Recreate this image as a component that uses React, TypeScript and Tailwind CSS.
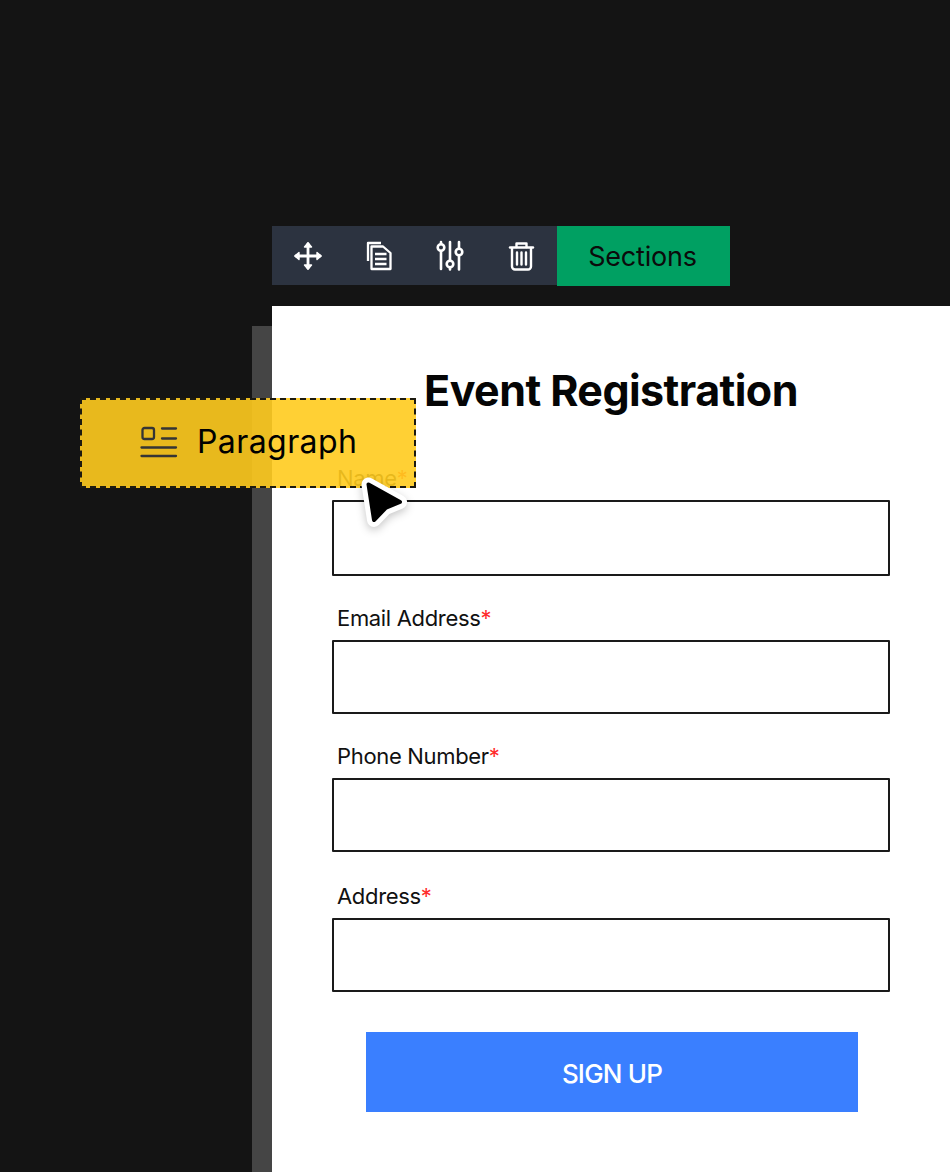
import React from "react";

const font = { fontFamily: "Inter, 'Liberation Sans', sans-serif" };

function Field({ label, h, mt }: { label: string; h: string; mt: string }) {
  return (
    <div className={mt}>
      <div className="h-[34px] pb-[10px] pl-[5px] text-[22px] leading-[24px] tracking-[-0.33px] text-[#111]">
        {label}
        <span className="text-[#ff2a2a]">*</span>
      </div>
      <div className={`${h} rounded-[1px] border-2 border-[#1a1a1a] bg-white`} />
    </div>
  );
}

export default function App() {
  return (
    <div className="relative h-[1172px] w-[950px] overflow-hidden bg-[#141414]" style={font}>
      <div className="pt-[226px] pl-[272px]">
        <div className="flex h-[60px] w-[458px]">
          <div className="flex h-[59px] w-[285px] items-start gap-[35px] bg-[#2c3340] pt-[12px] pl-[18px] text-white">
            <svg width="36" height="36" viewBox="0 0 36 36" fill="none" stroke="white" strokeWidth="2.8" strokeLinecap="round" strokeLinejoin="round">
              <path d="M18 6v24M6 18h24" />
              <path d="M14.500 9 18 4.800 21.500 9z M14.500 27 18 31.200 21.500 27z M9 14.500 4.800 18 9 21.500z M27 14.500 31.200 18 27 21.500z" fill="white" strokeWidth="1.400" />
            </svg>
            <svg width="36" height="36" viewBox="0 0 36 36" fill="none" stroke="white" strokeWidth="2.300" strokeLinejoin="round">
              <path d="M7 23V5h13" />
              <path d="M10.500 8.500h11.500L29.500 15v16H10.500z" />
              <path d="M14 16h11.500M14 21h11.500M14 26h11.500" />
            </svg>
            <svg width="36" height="36" viewBox="0 0 36 36" fill="none" stroke="white" strokeWidth="2.600">
              <path d="M9 13v18M9 4v2M18 4v18M18 30v1.500M27 4v6M27 18v13.500" strokeLinecap="round" />
              <circle cx="9" cy="9.500" r="3.300" />
              <circle cx="18" cy="26" r="3.300" />
              <circle cx="27" cy="14" r="3.300" />
            </svg>
            <svg width="36" height="36" viewBox="0 0 36 36" fill="none" stroke="white" strokeWidth="2.400" strokeLinejoin="round" strokeLinecap="round">
              <path d="M7 9.500h23" />
              <path d="M13.500 9V5.500h10V9" />
              <path d="M9 10v18.500a3 3 0 0 0 3 3h13a3 3 0 0 0 3-3V10" />
              <path d="M14 14.500v12M18.500 14.500v12M23 14.500v12" />
            </svg>
          </div>
          <div className="flex h-[60px] w-[173px] items-center justify-center bg-[#00a062] pt-[2px] pr-[2px] text-[27px] tracking-[-0.2px] text-[#0b0b0b]">
            Sections
          </div>
        </div>
      </div>

      <div className="mt-[20px] ml-[252px] flex">
        <div className="mt-[20px] w-5 bg-[#454545]" />
        <main className="h-[866px] w-[678px] bg-white px-[60px]">
          <h1 className="h-[128px] pt-[58px] text-center text-[43px] leading-[52px] font-bold tracking-[-0.56px] text-[#050505]">
            Event Registration
          </h1>
          <Field label="Name" h="h-[76px]" mt="mt-[32px]" />
          <Field label="Email Address" h="h-[74px]" mt="mt-[30px]" />
          <Field label="Phone Number" h="h-[74px]" mt="mt-[30px]" />
          <Field label="Address" h="h-[74px]" mt="mt-[32px]" />
          <div className="mt-[40px] flex justify-center pl-[2px]">
            <button className="h-[80px] w-[492px] bg-[#3a7fff] pt-[3px] text-[26px] font-medium tracking-[-0.8px] text-white">
              SIGN UP
            </button>
          </div>
        </main>
      </div>

      <div className="absolute top-[398px] left-[80px] flex h-[90px] w-[336px] items-center border-2 border-dashed border-[#1c1a10] bg-[rgba(255,203,30,0.9)] pl-[57px]">
        <svg width="40" height="36" viewBox="0 0 40 36" fill="none" stroke="#353535" strokeWidth="2.300" strokeLinecap="round">
          <rect x="3.500" y="3" width="11.500" height="11" rx="2" />
          <path d="M23 3.500h14M23 13.500h14M2.500 22.500h34.500M2.500 31h34.500" />
        </svg>
        <span className="mb-[3px] ml-[18px] text-[32px] tracking-[0.42px] text-black">Paragraph</span>
      </div>

      <svg className="absolute top-[470px] left-[356px] drop-shadow-[0_3px_4px_rgba(0,0,0,0.22)]" width="60" height="66" viewBox="0 0 60 66">
        <path d="M12.500 14.500 44 32 29.500 38 18 50z" fill="white" stroke="white" strokeWidth="14" strokeLinejoin="round" />
        <path d="M12.500 14.500 44 32 29.500 38 18 50z" fill="black" stroke="black" strokeWidth="4" strokeLinejoin="round" />
      </svg>
    </div>
  );
}
